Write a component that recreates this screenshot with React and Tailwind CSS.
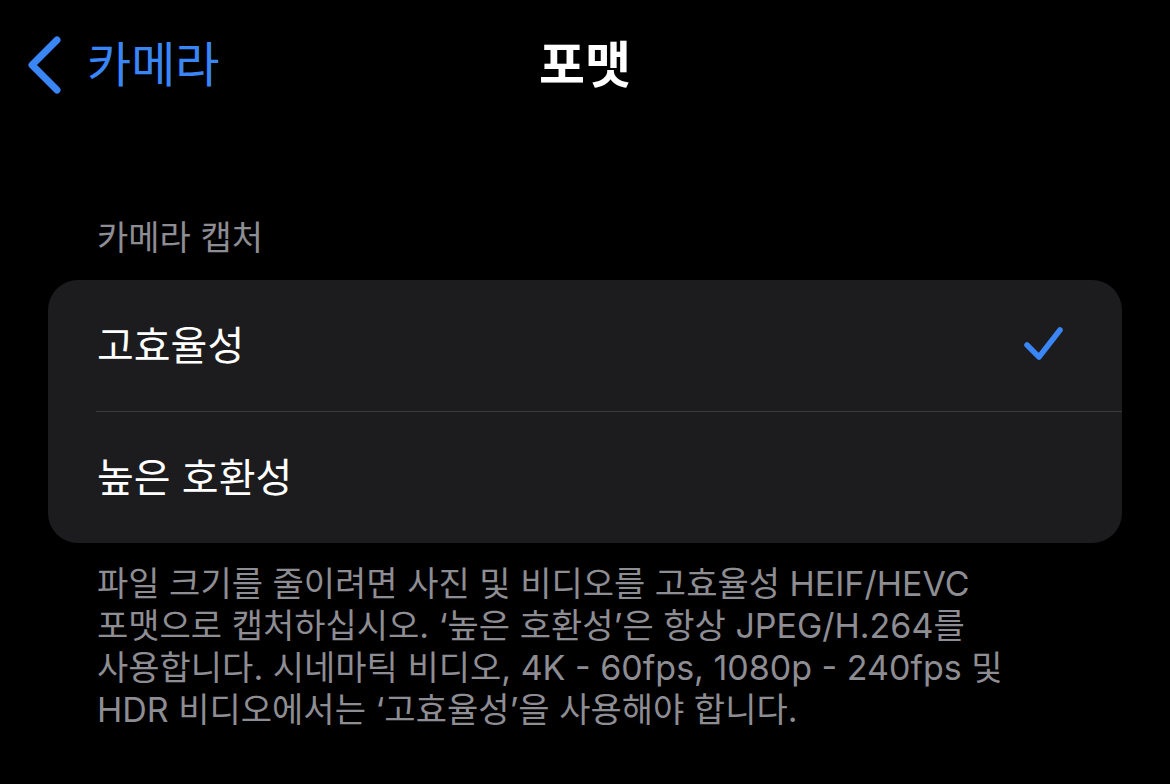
import { useState } from 'react'

const FONT = { fontFamily: 'Inter, "Noto Sans CJK KR", "Noto Sans", sans-serif' }

const OPTIONS = [
  { key: 'heif', label: '고효율성' },
  { key: 'jpeg', label: '높은 호환성' },
]

function Chevron() {
  return (
    <svg width="36" height="58" viewBox="0 0 36 58" fill="none">
      <path d="M31 4 L6 29 L31 54" stroke="#3b86f7" strokeWidth="7" strokeLinecap="round" strokeLinejoin="round" />
    </svg>
  )
}

function Check() {
  return (
    <svg width="40" height="40" viewBox="0 0 40 40" fill="none">
      <path d="M3 19 L15 31 L36 4" stroke="#3b86f7" strokeWidth="5.5" strokeLinecap="round" strokeLinejoin="round" />
    </svg>
  )
}

export default function App() {
  const [selected, setSelected] = useState('heif')

  return (
    <div className="w-[1170px] h-[784px] bg-black text-white overflow-hidden" style={FONT}>
      {/* ── Nav bar ───────────────────────────── */}
      <div className="grid grid-cols-[1fr_auto_1fr] items-center h-[130px]">
        <div className="flex items-center gap-[25px] pl-[26px]">
          <Chevron />
          <span className="text-[48px] text-[#3b86f7] leading-none">카메라</span>
        </div>
        <h1 className="text-[50px] font-bold leading-none">포맷</h1>
        <div />
      </div>

      {/* ── Section ───────────────────────────── */}
      <p className="mt-[88px] pl-[97px] text-[34px] leading-[40px] text-[#8d8d93]">카메라 캡처</p>

      <div className="mt-[22px] mx-[48px] bg-[#1c1c1e] rounded-[30px] overflow-hidden">
        {OPTIONS.map((o, i) => (
          <div key={o.key}>
            {i > 0 && <div className="ml-[48px] h-px bg-[#3a3a3c]" />}
            <button
              onClick={() => setSelected(o.key)}
              className="w-full h-[131px] flex items-center justify-between pl-[49px] pr-[58px] text-left"
            >
              <span className="text-[40px] leading-none text-white">{o.label}</span>
              {selected === o.key && <Check />}
            </button>
          </div>
        ))}
      </div>

      <p className="mt-[20px] pl-[97px] text-[34px] leading-[42px] text-[#8d8d93] whitespace-nowrap">
        파일 크기를 줄이려면 사진 및 비디오를 고효율성 HEIF/HEVC
        <br />
        포맷으로 캡처하십시오. ‘높은 호환성’은 항상 JPEG/H.264를
        <br />
        사용합니다. 시네마틱 비디오, 4K - 60fps, 1080p - 240fps 및
        <br />
        HDR 비디오에서는 ‘고효율성’을 사용해야 합니다.
      </p>
    </div>
  )
}
